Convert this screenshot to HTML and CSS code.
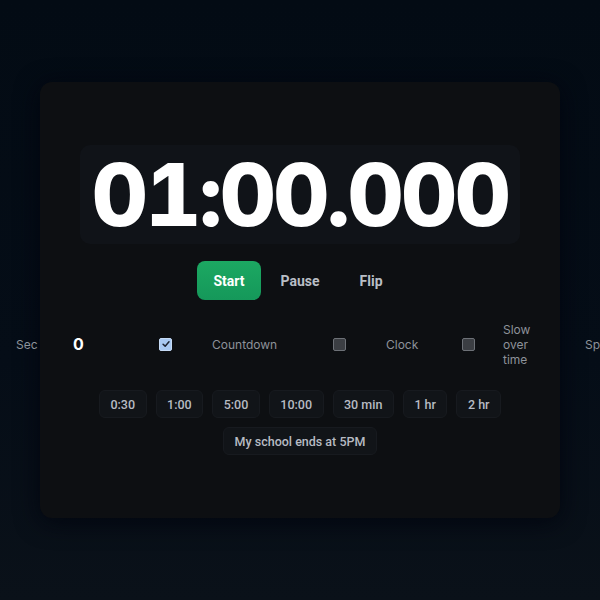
FILE: index.html
```html
<!DOCTYPE html>
<html>
<head>
<meta charset="utf-8">
<link rel="stylesheet" href="styles.css">
</head>
<body>
<main class="card">
  <div class="timer"><span class="digits">01:00.000</span></div>
  <div class="controls">
    <button class="btn start">Start</button>
    <button class="btn plain">Pause</button>
    <button class="btn plain">Flip</button>
  </div>
  <div class="options">
    <span class="opt lbl w-sec">Sec</span>
    <span class="opt val w-val">0</span>
    <span class="opt w-cb1"><span class="cb checked"><svg viewBox="0 0 12 12" width="10" height="10"><path d="M2.5 6.3 L5 8.6 L9.6 3.4" fill="none" stroke="#1b2230" stroke-width="1.8" stroke-linecap="round" stroke-linejoin="round"/></svg></span></span>
    <span class="opt lbl w-count">Countdown</span>
    <span class="opt w-cb2"><span class="cb"></span></span>
    <span class="opt lbl w-clock">Clock</span>
    <span class="opt w-cb3"><span class="cb"></span></span>
    <span class="opt lbl w-slow"><span class="slow">Slow over time</span></span>
    <span class="opt lbl w-speed">Speed</span>
  </div>
  <div class="presets">
    <div class="preset-row">
      <button class="preset">0:30</button>
      <button class="preset">1:00</button>
      <button class="preset">5:00</button>
      <button class="preset">10:00</button>
      <button class="preset">30 min</button>
      <button class="preset">1 hr</button>
      <button class="preset">2 hr</button>
    </div>
    <div class="preset-row">
      <button class="preset">My school ends at 5PM</button>
    </div>
  </div>
</main>
</body>
</html>
```

FILE: styles.css
```css
html, body {
  margin: 0;
  padding: 0;
  height: 100%;
  overflow: hidden;
}
body {
  background: linear-gradient(180deg, #030b14 0%, #050d17 60%, #0a1119 100%);
  font-family: Inter, "Noto Sans", sans-serif;
  padding-top: 82px;
  box-sizing: border-box;
}
.card {
  width: 520px;
  height: 436px;
  margin: 0 auto;
  box-sizing: border-box;
  background: #0d0f12;
  border-radius: 12px;
  box-shadow: 0 4px 24px rgba(0, 4, 14, 0.9);
  padding: 63px 40px 0;
  display: flex;
  flex-direction: column;
}
.timer {
  height: 99px;
  background: #101318;
  border-radius: 10px;
  display: flex;
  align-items: center;
  justify-content: center;
}
.digits {
  font-family: Inter, sans-serif;
  font-weight: 800;
  font-size: 87px;
  color: #ffffff;
  line-height: 1;
  font-feature-settings: "tnum" 1;
  letter-spacing: -2.6px;
}
.controls {
  margin-top: 17px;
  display: flex;
  justify-content: center;
}
.btn {
  font-family: Roboto, sans-serif;
  font-weight: 700;
  font-size: 14px;
  height: 39px;
  border: none;
  border-radius: 8px;
  background: transparent;
  color: #b9bec6;
  padding: 0 20px;
}
.btn.start {
  background: linear-gradient(180deg, #1ca862 0%, #15985a 100%);
  color: #ffffff;
  padding: 0 16px;
}
.options {
  margin: 21px -64px 0;
  display: flex;
  align-items: center;
  height: 46px;
}
.opt {
  flex-shrink: 0;
  display: flex;
  align-items: center;
}
.lbl {
  font-size: 12px;
  color: #8d929a;
}
.val {
  font-size: 16px;
  font-weight: 700;
  color: #ffffff;
}
.w-sec { width: 57px; }
.w-val { width: 86px; }
.w-cb1 { width: 53px; }
.w-count { width: 121px; }
.w-cb2 { width: 53px; }
.w-clock { width: 76px; }
.w-cb3 { width: 41px; }
.w-slow { width: 82px; }
.w-speed { width: 80px; }
.slow {
  width: 34px;
  line-height: 15px;
}
.cb {
  width: 11px;
  height: 11px;
  border: 1px solid #6d7177;
  border-radius: 2px;
  background: #3b3e43;
  display: flex;
  align-items: center;
  justify-content: center;
}
.cb.checked {
  background: #a9c9f2;
  border-color: #c5daf5;
}
.presets {
  margin-top: 23px;
  display: flex;
  flex-direction: column;
  gap: 9px;
}
.preset-row {
  display: flex;
  justify-content: center;
  gap: 9px;
}
.preset {
  font-family: Roboto, sans-serif;
  font-weight: 500;
  font-size: 12.5px;
  color: #b7bbc3;
  height: 28px;
  padding: 0 10.5px;
  background: #111418;
  border: 1px solid #171a1f;
  border-radius: 6px;
}
```
